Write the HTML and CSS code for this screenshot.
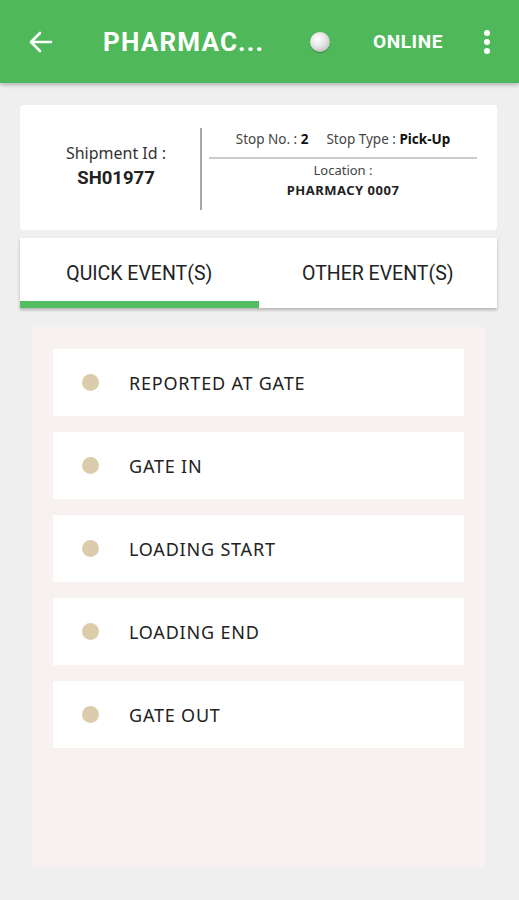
FILE: index.html
```html
<!DOCTYPE html>
<html>
<head>
<meta charset="utf-8">
<link rel="stylesheet" href="styles.css">
</head>
<body>
<header class="appbar">
  <svg class="back" width="26" height="24" viewBox="0 0 26 24"><path d="M24 12H4M13 3L4 12l9 9" fill="none" stroke="#fff" stroke-width="2.6" stroke-linecap="round" stroke-linejoin="round"/></svg>
  <div class="title">PHARMAC...</div>
  <div class="status-dot"></div>
  <div class="online">ONLINE</div>
  <div class="more"><span></span><span></span><span></span></div>
</header>
<main class="content">
  <section class="info card">
    <div class="ship">
      <div class="ship-label">Shipment Id :</div>
      <div class="ship-id">SH01977</div>
    </div>
    <div class="vline"></div>
    <div class="stop">
      <div class="stop-top">
        <span>Stop No. : <b>2</b></span>
        <span>Stop Type : <b>Pick-Up</b></span>
      </div>
      <div class="hline"></div>
      <div class="loc-label">Location :</div>
      <div class="loc">PHARMACY 0007</div>
    </div>
  </section>
  <nav class="tabs">
    <div class="tab active">QUICK EVENT(S)</div>
    <div class="tab">OTHER EVENT(S)</div>
  </nav>
  <section class="panel">
    <div class="row"><span class="dot"></span><span class="label">REPORTED AT GATE</span></div>
    <div class="row"><span class="dot"></span><span class="label">GATE IN</span></div>
    <div class="row"><span class="dot"></span><span class="label">LOADING START</span></div>
    <div class="row"><span class="dot"></span><span class="label">LOADING END</span></div>
    <div class="row"><span class="dot"></span><span class="label">GATE OUT</span></div>
  </section>
</main>
</body>
</html>
```
FILE: styles.css
```css
* { box-sizing: border-box; }
html, body { margin: 0; padding: 0; }
body {
  width: 519px;
  height: 900px;
  background: #efefef;
  font-family: Roboto, "Noto Sans", sans-serif;
  overflow: hidden;
}
.appbar {
  height: 83px;
  background: #4fb85a;
  display: flex;
  align-items: center;
  box-shadow: 0 2px 4px rgba(0,0,0,0.25);
  color: #fff;
  position: relative;
  z-index: 2;
}
.back { margin-left: 27px; }
.title {
  margin-left: 50px;
  font-size: 26px;
  font-weight: 700;
  letter-spacing: 1.2px;
  width: 180px;
}
.status-dot {
  margin-left: 27px;
  width: 20px;
  height: 20px;
  border-radius: 50%;
  background: radial-gradient(circle at 40% 35%, #ffffff 0%, #e4e4e4 45%, #a8a8a8 100%);
  box-shadow: 0 1px 1px rgba(0,0,0,0.3);
}
.online {
  margin-left: 43px;
  font-size: 19px;
  font-weight: 700;
  letter-spacing: 0.6px;
}
.more {
  margin-left: 41px;
  display: flex;
  flex-direction: column;
  gap: 3px;
}
.more span {
  width: 6px; height: 6px; border-radius: 50%; background: #fff;
}
.content {
  padding: 22px 22px 0 20px;
  display: flex;
  flex-direction: column;
}
.card {
  background: #fff;
  border-radius: 4px;
}
.info {
  height: 125px;
  display: flex;
  align-items: center;
}
.ship {
  width: 180px;
  padding-left: 12px;
  text-align: center;
  color: #222;
  padding-bottom: 4px;
}
.ship-label { font-size: 16px; color: #333; font-family: "Noto Sans", sans-serif; }
.ship-id { font-size: 18.5px; font-weight: 700; margin-top: 3px; color: #222; }
.vline {
  width: 2px;
  height: 82px;
  background: #a9a9a9;
  margin-top: 2px;
}
.stop {
  margin-left: 7px;
  width: 268px;
  text-align: center;
  font-family: "Noto Sans", sans-serif;
  color: #444;
  font-size: 13.5px;
  padding-bottom: 6px;
}
.stop-top { display: flex; justify-content: center; gap: 18px; line-height: 18px; }
.stop-top b { color: #111; }
.hline { height: 2px; background: #ccc; margin: 9px 0 1px; }
.loc-label { font-size: 13px; line-height: 20px; }
.loc { font-size: 13px; font-weight: 700; color: #222; margin-top: 0; letter-spacing: 0.5px; line-height: 20px; }
.tabs {
  margin-top: 8px;
  height: 70px;
  background: #fff;
  display: flex;
  box-shadow: 0 2px 3px rgba(0,0,0,0.25);
}
.tab {
  flex: 1;
  display: flex;
  align-items: center;
  justify-content: center;
  font-size: 19.5px;
  color: #222;
  padding-top: 8px;
  border-bottom: 7px solid transparent;
}
.tab.active { border-bottom-color: #53bd61; }
.panel {
  margin: 19px 12px 0 12px;
  height: 540px;
  background: #f7f1f0;
  padding: 22px 21px;
  display: flex;
  flex-direction: column;
  gap: 16px;
}
.row {
  height: 67px;
  background: #fff;
  display: flex;
  align-items: center;
}
.dot {
  width: 17px; height: 17px; border-radius: 50%;
  background: #dbcdac;
  margin-left: 29px;
}
.label {
  margin-left: 30px;
  font-family: "Noto Sans", sans-serif;
  font-size: 18px;
  letter-spacing: 0.8px;
  color: #222;
}
```
